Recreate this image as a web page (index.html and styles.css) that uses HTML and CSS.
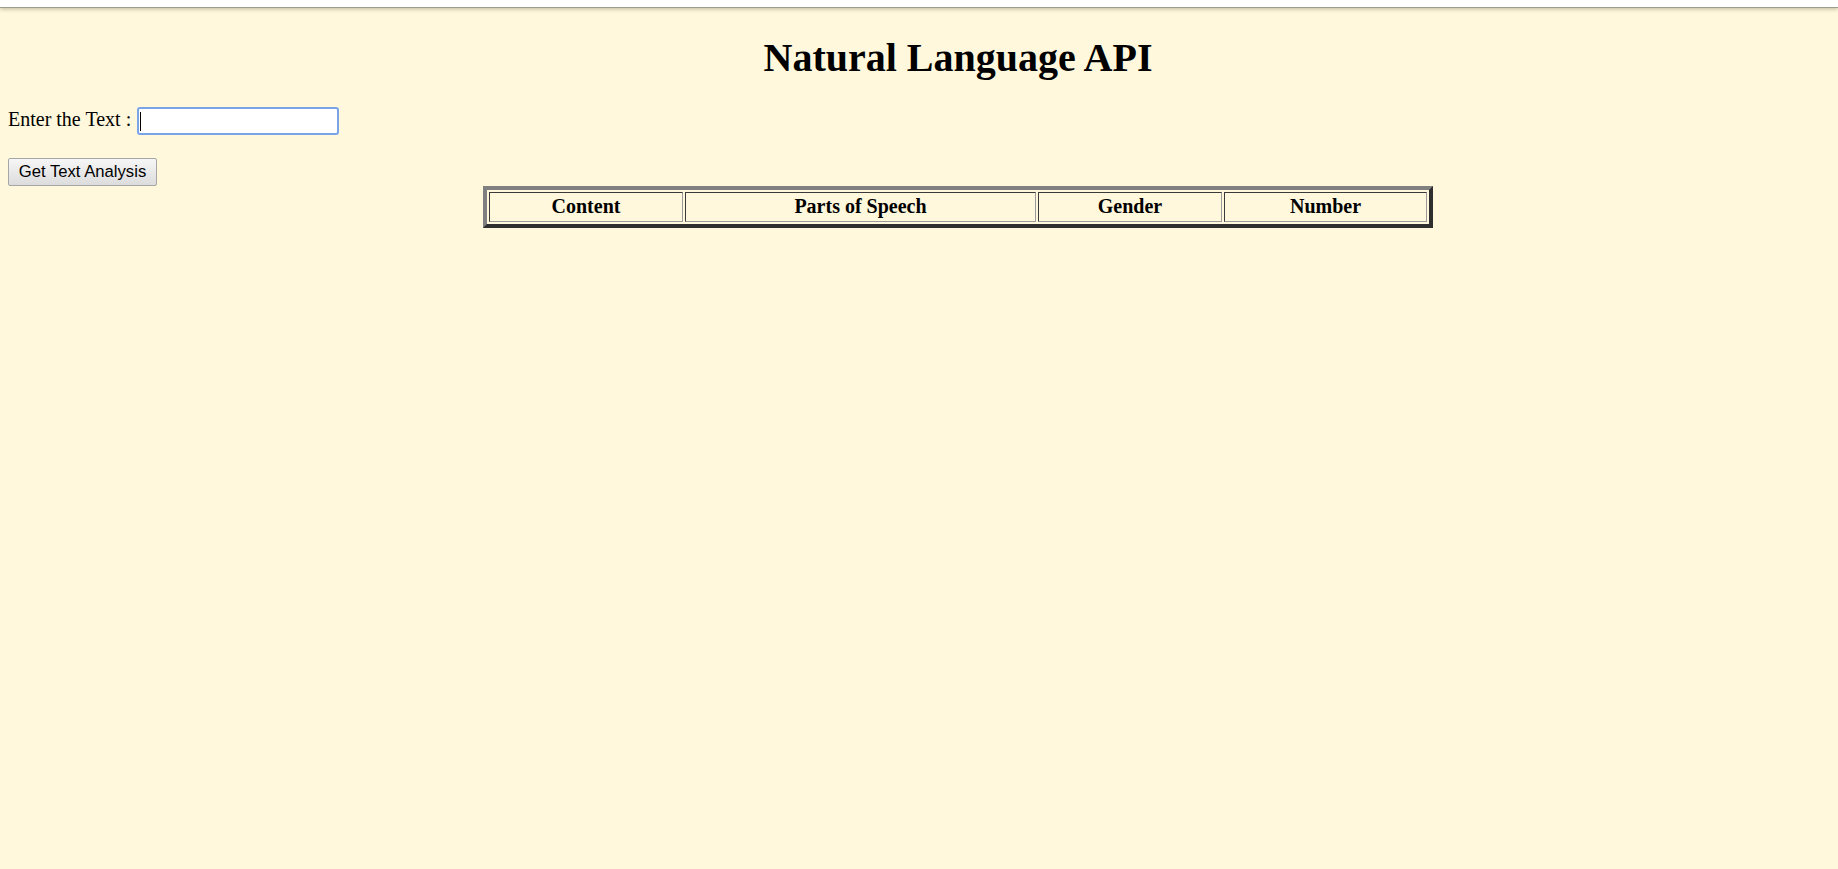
FILE: index.html
```html
<!DOCTYPE html>
<html lang="en">
<head>
<meta charset="utf-8">
<title>Natural Language API</title>
<link rel="stylesheet" href="styles.css">
</head>
<body>
<div class="topbar"></div>
<div class="page">
  <h1 class="title">Natural Language API</h1>
  <div class="entry">
    <label class="entry-label" for="text">Enter the Text :</label>
    <input class="entry-input" id="text" type="text">
  </div>
  <div class="actions">
    <button class="analyze-btn" type="button">Get Text Analysis</button>
  </div>
  <table class="results">
    <thead>
      <tr>
        <th class="col-content">Content</th>
        <th class="col-pos">Parts of Speech</th>
        <th class="col-gender">Gender</th>
        <th class="col-number">Number</th>
      </tr>
    </thead>
  </table>
</div>
</body>
</html>
```

FILE: styles.css
```css
html {
  overflow: hidden;
  background: #fff8dc;
}

body {
  margin: 0;
  background: #fff8dc;
  font-family: "Liberation Serif", "Times New Roman", serif;
  color: #000;
}

.topbar {
  height: 7px;
  background: #ffffff;
  border-bottom: 1px solid #9d9d8e;
  box-shadow: 0 1px 4px rgba(110, 100, 70, 0.45);
  position: relative;
}

.page {
  width: 1900px;
  margin-left: 8px;
}

.title {
  margin: 28px 0 0;
  font-size: 40px;
  line-height: 44px;
  font-weight: bold;
  text-align: center;
}

.entry {
  display: flex;
  align-items: flex-start;
  margin-top: 25px;
  font-size: 20px;
  line-height: 28px;
}

.entry-label {
  margin-right: 6px;
}

.entry-input {
  box-sizing: border-box;
  width: 202px;
  height: 28px;
  margin: 2px 0 0;
  padding: 0 3px;
  border: 2px solid #7ba4e8;
  border-radius: 3px;
  outline: none;
  background: #ffffff linear-gradient(#000, #000) no-repeat 1px 3px / 1px 19px;
  font: 16px "Liberation Sans", Arial, sans-serif;
}

.actions {
  margin-top: 23px;
  display: flex;
}

.analyze-btn {
  box-sizing: border-box;
  width: 149px;
  height: 28px;
  margin: 0;
  padding: 0;
  border: 1px solid #a6a6a6;
  border-radius: 2px;
  background: linear-gradient(#f6f6f6, #ececec 40%, #dcdcdc);
  font: 16.67px "Liberation Sans", Arial, sans-serif;
  color: #000;
}

.results {
  margin: 0 auto;
  border-collapse: separate;
  border-spacing: 2px;
  border-style: solid;
  border-width: 4px;
  border-color: #808080 #2e2e2e #2e2e2e #808080;
}

.results th {
  box-sizing: border-box;
  padding: 0 1px 2px;
  height: 30px;
  border: 1px solid;
  border-color: #3a3a3a #9a9a9a #9a9a9a #3a3a3a;
  font-size: 20px;
  line-height: 26px;
  font-weight: bold;
  text-align: center;
}

.col-content { width: 194px; }
.col-pos { width: 351px; }
.col-gender { width: 184px; }
.col-number { width: 203px; }
```
